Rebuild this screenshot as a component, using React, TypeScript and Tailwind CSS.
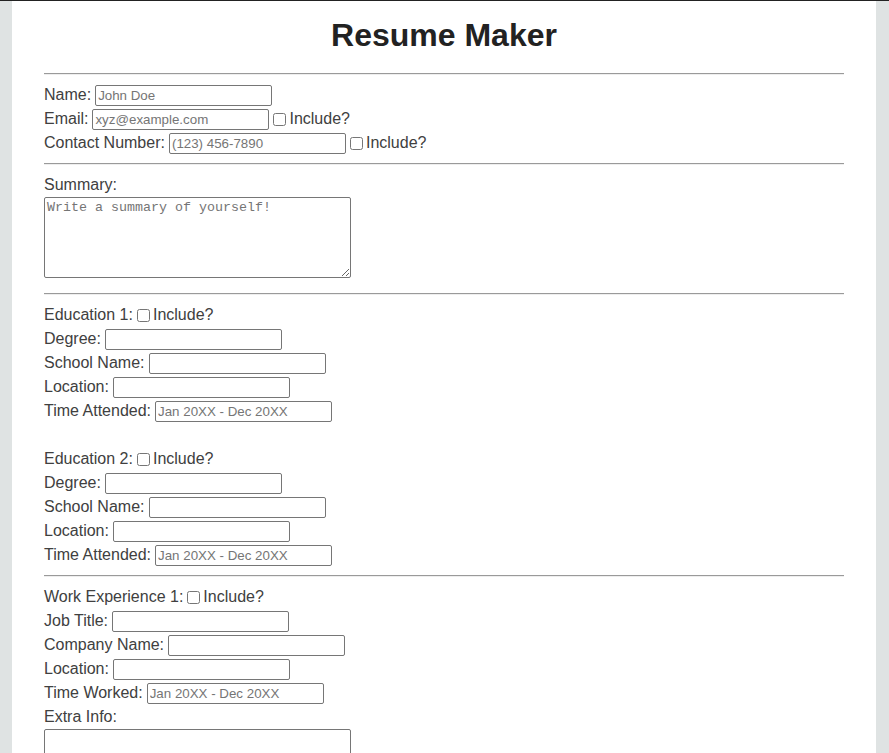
import React from 'react'

const inputCls =
  "shrink-0 ml-[4px] w-[177px] h-[21px] border border-[#767676] rounded-[2px] px-[2px] text-[13.33px] leading-[15px] text-[#222] placeholder:text-[#757575] bg-white"

const Field = ({ label, placeholder = "", check = false }: { label: string; placeholder?: string; check?: boolean }) => (
  <div className="flex items-center h-6">
    <span>{label}</span>
    <input type="text" placeholder={placeholder} className={inputCls} />
    {check && (
      <>
        <input type="checkbox" className="w-[13px] h-[13px] ml-[4px] mr-[3px] shrink-0" />
        <span>Include?</span>
      </>
    )}
  </div>
)

const Heading = ({ label }: { label: string }) => (
  <div className="flex items-center h-6">
    <span className="whitespace-pre">{label}</span>
    <input type="checkbox" className="w-[13px] h-[13px] ml-[4px] mr-[3px] shrink-0" />
    <span>Include?</span>
  </div>
)

const Rule = () => <hr className="my-2 h-0 border-t border-b border-t-[#9a9a9a] border-b-[#eeeeee]" />

const Education = ({ n }: { n: number }) => (
  <div>
    <Heading label={`Education ${n}:`} />
    <Field label="Degree:" />
    <Field label="School Name:" />
    <Field label="Location:" />
    <Field label="Time Attended:" placeholder="Jan 20XX - Dec 20XX" />
  </div>
)

const App = () => {
  return (
    <div
      className="h-screen overflow-hidden border-t border-[#222] bg-[#dfe3e3] text-[16px] text-[#404040]"
      style={{ fontFamily: '"Liberation Sans", Arial, sans-serif' }}
    >
      <div className="w-[864px] ml-[12px] bg-white px-8 pt-4 min-h-full">
        <h1 className="text-[32px] font-bold leading-[37px] text-center text-[#222] mb-[19px]">Resume Maker</h1>
        <Rule />

        <Field label="Name:" placeholder="John Doe" />
        <Field label="Email:" placeholder="xyz@example.com" check />
        <Field label="Contact Number:" placeholder="(123) 456-7890" check />
        <Rule />

        <div className="h-6 leading-6">Summary:</div>
        <textarea
          placeholder="Write a summary of yourself!"
          className="block w-[307px] h-[81px] mb-[15px] border border-[#767676] rounded-[2px] p-[2px] text-[13.33px] leading-[15px] placeholder:text-[#757575]"
          style={{ fontFamily: '"Liberation Mono", "DejaVu Sans Mono", monospace' }}
        />
        <Rule />

        <Education n={1} />
        <div className="h-6" />
        <Education n={2} />
        <Rule />

        <Heading label="Work Experience 1:" />
        <Field label="Job Title:" />
        <Field label="Company Name:" />
        <Field label="Location:" />
        <Field label="Time Worked:" placeholder="Jan 20XX - Dec 20XX" />
        <div className="h-6 leading-6">Extra Info:</div>
        <textarea
          className="block w-[307px] h-[81px] border border-[#767676] rounded-[2px] p-[2px] text-[13.33px]"
          style={{ fontFamily: '"Liberation Mono", "DejaVu Sans Mono", monospace' }}
        />
      </div>
    </div>
  )
}

export default App
